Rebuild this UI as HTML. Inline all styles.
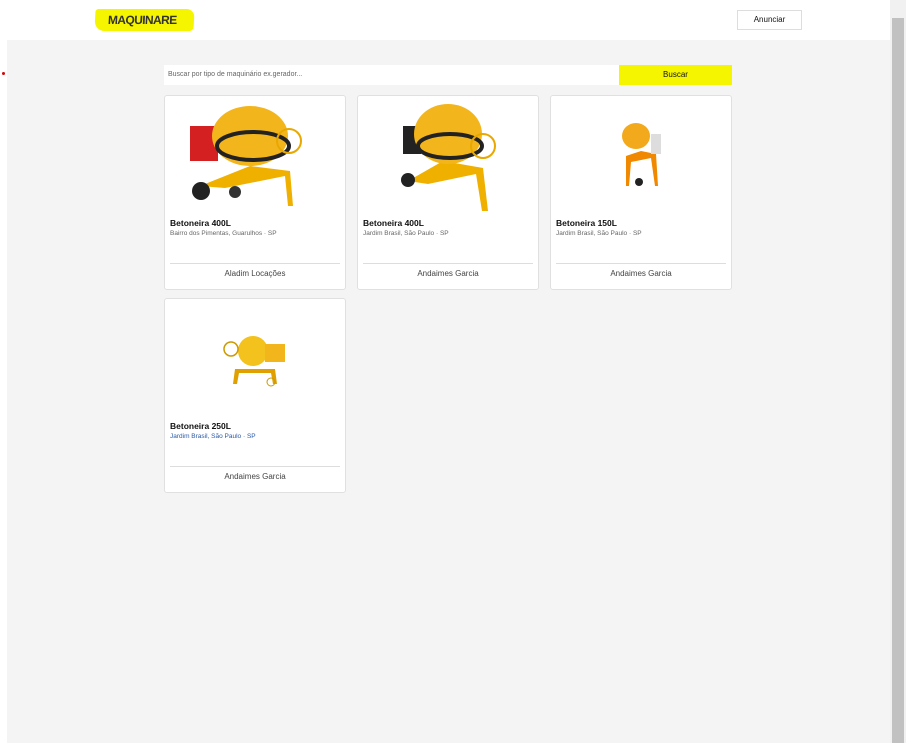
<!DOCTYPE html>
<html><head><meta charset="utf-8"><style>
*{box-sizing:border-box;margin:0;padding:0}
body{width:906px;height:743px;overflow:hidden;background:#fff;font-family:"Liberation Sans",sans-serif;position:relative}
.hdr{position:absolute;left:0;top:0;width:890px;height:40px;background:#fff}
.logo{position:absolute;left:95px;top:9px;width:99px;height:22px;background:#f5f500;border-radius:3px 8px 4px 10px;transform:skewX(-3deg)}
.logo span{position:absolute;left:13px;top:4px;font-size:12px;font-weight:bold;color:#333;letter-spacing:-0.6px}
.btn{position:absolute;left:737px;top:10px;width:65px;height:20px;border:1px solid #ddd;font-size:8px;text-align:center;line-height:18px;color:#111;background:#fff}
.main{position:absolute;left:7px;top:40px;width:883px;height:703px;background:#f4f4f4}
.sb{position:absolute;left:890px;top:0;width:16px;height:743px;background:#f1f1f1}
.thumb{position:absolute;left:892px;top:18px;width:12px;height:725px;background:#c1c1c1}
.dot{position:absolute;left:2px;top:72px;width:3px;height:3px;border-radius:50%;background:#d00}
.inp{position:absolute;left:164px;top:65px;width:455px;height:20px;background:#fff;font-size:7px;color:#666;padding:6px 0 0 4px}
.bus{position:absolute;left:619px;top:65px;width:113px;height:20px;background:#f5f500;font-size:8px;text-align:center;line-height:20px;color:#111}
.card{position:absolute;width:182px;height:195px;background:#fff;border:1px solid #e0e0e0;border-radius:3px}
.card svg{position:absolute;left:0;top:0}
.t{position:absolute;left:5px;top:122px;font-size:8.5px;font-weight:bold;color:#111}
.l{position:absolute;left:5px;top:134px;font-size:6.5px;color:#666}
.hr{position:absolute;left:5px;right:5px;top:167px;border-top:1px solid #ddd}
.s{position:absolute;left:0;right:0;top:173px;text-align:center;font-size:8px;color:#444}
</style></head><body>
<div class="hdr"><div class="logo"><span>MAQUINARE</span></div><div class="btn">Anunciar</div></div>
<div class="main"></div>
<div class="sb"></div><div class="thumb"></div>
<div class="dot"></div>
<div class="inp">Buscar por tipo de maquinário ex.gerador...</div>
<div class="bus">Buscar</div>

<div class="card" style="left:164px;top:95px">
<svg width="182" height="120"><rect x="25" y="30" width="28" height="35" fill="#d42020"/><path d="M35 90 L85 70 L125 75 L128 110 L123 110 L120 80 L60 92" fill="#f0b000"/><ellipse cx="85" cy="40" rx="38" ry="30" fill="#f3b51c"/><ellipse cx="88" cy="50" rx="36" ry="14" fill="none" stroke="#222" stroke-width="4"/><circle cx="124" cy="45" r="12" fill="none" stroke="#e8a800" stroke-width="2"/><circle cx="36" cy="95" r="9" fill="#222"/><circle cx="70" cy="96" r="6" fill="#333"/></svg>
<div class="t">Betoneira 400L</div><div class="l">Bairro dos Pimentas, Guarulhos · SP</div><div class="hr"></div><div class="s">Aladim Locações</div></div>

<div class="card" style="left:357px;top:95px">
<svg width="182" height="120"><rect x="45" y="30" width="18" height="28" fill="#222"/><path d="M50 85 L85 65 L125 72 L130 115 L124 115 L118 78 L70 88" fill="#f0b000"/><ellipse cx="90" cy="38" rx="34" ry="30" fill="#f3b51c"/><ellipse cx="92" cy="50" rx="32" ry="12" fill="none" stroke="#222" stroke-width="4"/><circle cx="125" cy="50" r="12" fill="none" stroke="#e8a800" stroke-width="2"/><circle cx="50" cy="84" r="7" fill="#222"/></svg>
<div class="t">Betoneira 400L</div><div class="l">Jardim Brasil, São Paulo · SP</div><div class="hr"></div><div class="s">Andaimes Garcia</div></div>

<div class="card" style="left:550px;top:95px">
<svg width="182" height="120"><path d="M75 60 L90 55 L105 58 L107 90 L104 90 L100 62 L80 66 L78 90 L75 90Z" fill="#f08800"/><ellipse cx="85" cy="40" rx="14" ry="13" fill="#f3a91c"/><rect x="100" y="38" width="10" height="20" fill="#ddd"/><circle cx="88" cy="86" r="4" fill="#222"/></svg>
<div class="t">Betoneira 150L</div><div class="l">Jardim Brasil, São Paulo · SP</div><div class="hr"></div><div class="s">Andaimes Garcia</div></div>

<div class="card" style="left:164px;top:298px">
<svg width="182" height="120"><path d="M70 70 L110 70 L112 85 L108 85 L106 74 L74 74 L72 85 L68 85Z" fill="#e0a000"/><ellipse cx="88" cy="52" rx="15" ry="15" fill="#f3c21c"/><rect x="100" y="45" width="20" height="18" fill="#f3b51c"/><circle cx="66" cy="50" r="7" fill="none" stroke="#c90" stroke-width="1.5"/><circle cx="106" cy="83" r="4" fill="none" stroke="#c90"/></svg>
<div class="t">Betoneira 250L</div><div class="l" style="color:#2a5aa8">Jardim Brasil, São Paulo · SP</div><div class="hr"></div><div class="s">Andaimes Garcia</div></div>
</body></html>
